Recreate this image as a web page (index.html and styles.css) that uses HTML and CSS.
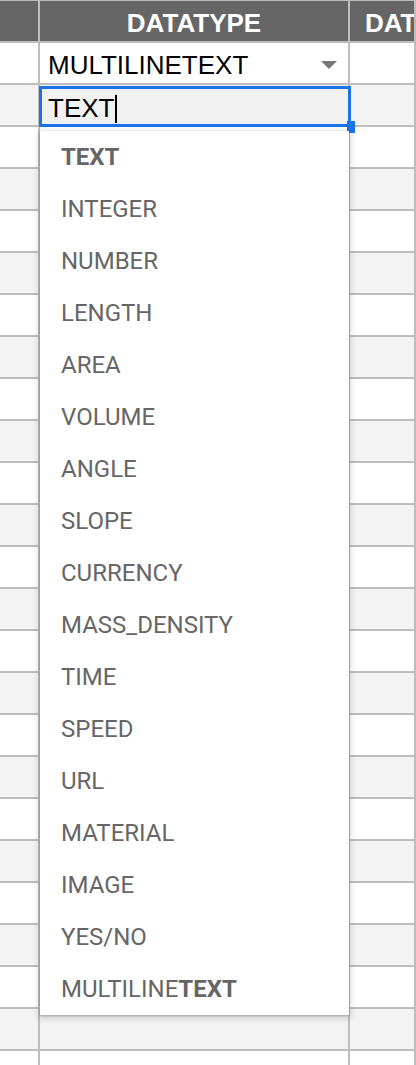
FILE: index.html
```html
<!DOCTYPE html>
<html lang="en">
<head>
    <meta charset="UTF-8">
    <meta name="viewport" content="width=device-width, initial-scale=1.0">
    <title>Datatype</title>
    <link rel="stylesheet" href="styles.css">
</head>
<body>

<div class="sheet">
    <div class="row head">
        <div class="cell a"></div>
        <div class="cell b">DATATYPE</div>
        <div class="cell c">DATAVALUE</div>
    </div>
    <div class="row">
        <div class="cell a"></div>
        <div class="cell b value">MULTILINETEXT<span class="caret"></span></div>
        <div class="cell c"></div>
    </div>
    <div class="row alt">
        <div class="cell a"></div>
        <div class="cell b editing">
            <div class="editor">TEXT<span class="cursor"></span></div>
            <div class="handle"></div>
            <ul class="menu">
                <li><b>TEXT</b></li>
                <li>INTEGER</li>
                <li>NUMBER</li>
                <li>LENGTH</li>
                <li>AREA</li>
                <li>VOLUME</li>
                <li>ANGLE</li>
                <li>SLOPE</li>
                <li>CURRENCY</li>
                <li>MASS_DENSITY</li>
                <li>TIME</li>
                <li>SPEED</li>
                <li>URL</li>
                <li>MATERIAL</li>
                <li>IMAGE</li>
                <li>YES/NO</li>
                <li>MULTILINE<b>TEXT</b></li>
            </ul>
        </div>
        <div class="cell c"></div>
    </div>
    <div class="row"><div class="cell a"></div><div class="cell b"></div><div class="cell c"></div></div>
    <div class="row alt"><div class="cell a"></div><div class="cell b"></div><div class="cell c"></div></div>
    <div class="row"><div class="cell a"></div><div class="cell b"></div><div class="cell c"></div></div>
    <div class="row alt"><div class="cell a"></div><div class="cell b"></div><div class="cell c"></div></div>
    <div class="row"><div class="cell a"></div><div class="cell b"></div><div class="cell c"></div></div>
    <div class="row alt"><div class="cell a"></div><div class="cell b"></div><div class="cell c"></div></div>
    <div class="row"><div class="cell a"></div><div class="cell b"></div><div class="cell c"></div></div>
    <div class="row alt"><div class="cell a"></div><div class="cell b"></div><div class="cell c"></div></div>
    <div class="row"><div class="cell a"></div><div class="cell b"></div><div class="cell c"></div></div>
    <div class="row alt"><div class="cell a"></div><div class="cell b"></div><div class="cell c"></div></div>
    <div class="row"><div class="cell a"></div><div class="cell b"></div><div class="cell c"></div></div>
    <div class="row alt"><div class="cell a"></div><div class="cell b"></div><div class="cell c"></div></div>
    <div class="row"><div class="cell a"></div><div class="cell b"></div><div class="cell c"></div></div>
    <div class="row alt"><div class="cell a"></div><div class="cell b"></div><div class="cell c"></div></div>
    <div class="row"><div class="cell a"></div><div class="cell b"></div><div class="cell c"></div></div>
    <div class="row alt"><div class="cell a"></div><div class="cell b"></div><div class="cell c"></div></div>
    <div class="row"><div class="cell a"></div><div class="cell b"></div><div class="cell c"></div></div>
    <div class="row alt"><div class="cell a"></div><div class="cell b"></div><div class="cell c"></div></div>
    <div class="row"><div class="cell a"></div><div class="cell b"></div><div class="cell c"></div></div>
    <div class="row alt"><div class="cell a"></div><div class="cell b"></div><div class="cell c"></div></div>
    <div class="row"><div class="cell a"></div><div class="cell b"></div><div class="cell c"></div></div>
    <div class="row alt"><div class="cell a"></div><div class="cell b"></div><div class="cell c"></div></div>
    <div class="row"><div class="cell a"></div><div class="cell b"></div><div class="cell c"></div></div>
</div>

</body>
</html>
```

FILE: styles.css
```css
body {
    margin: 0;
    overflow: hidden;
    background: #fff;
    font-family: 'Liberation Sans', Arial, sans-serif;
}
.sheet {
    border-top: 1px solid #bdbdbd;
}
.row {
    display: grid;
    grid-template-columns: 40px 310px 1fr;
    height: 42px;
}
.row.alt {
    background: #f3f3f3;
}
.cell {
    box-sizing: border-box;
    border-right: 2px solid #bdbdbd;
    border-bottom: 2px solid #bdbdbd;
    display: flex;
    align-items: flex-end;
    font-size: 26px;
    line-height: 30px;
    padding-bottom: 3px;
    white-space: nowrap;
    overflow: visible;
}
.head .cell {
    background: #666;
    color: #fff;
    font-weight: bold;
}
.head .b {
    justify-content: center;
}
.head .c {
    padding-left: 15px;
    overflow: hidden;
}
.value {
    padding-left: 8px;
    color: #000;
    position: relative;
}
.caret {
    position: absolute;
    left: 281px;
    top: 18px;
    border-left: 8px solid transparent;
    border-right: 8px solid transparent;
    border-top: 8px solid #777;
}
.editing {
    position: relative;
}
.editor {
    position: absolute;
    left: -1px;
    top: 1px;
    width: 312px;
    height: 41px;
    box-sizing: border-box;
    border: 3px solid #1a73e8;
    background: #f1f1f1;
    padding: 4px 0 0 6px;
    line-height: 30px;
    color: #000;
    z-index: 2;
}
.cursor {
    display: inline-block;
    width: 2px;
    height: 28px;
    background: #000;
    vertical-align: -6px;
    margin-left: 1px;
}
.handle {
    position: absolute;
    left: 307px;
    top: 36px;
    width: 8px;
    height: 12px;
    background: #1a73e8;
    z-index: 2;
}
.menu {
    position: absolute;
    left: 0;
    top: 46px;
    width: 309px;
    margin: 0;
    padding: 0;
    list-style: none;
    background: #fff;
    box-shadow: 0 2px 6px 2px rgba(60, 64, 67, 0.18), 0 1px 2px rgba(60, 64, 67, 0.35);
    z-index: 3;
}
.menu li {
    height: 52px;
    line-height: 52px;
    padding-left: 21px;
    font-family: Roboto, 'Liberation Sans', sans-serif;
    font-size: 24px;
    color: #666;
}
.menu b {
    font-weight: bold;
}
```
